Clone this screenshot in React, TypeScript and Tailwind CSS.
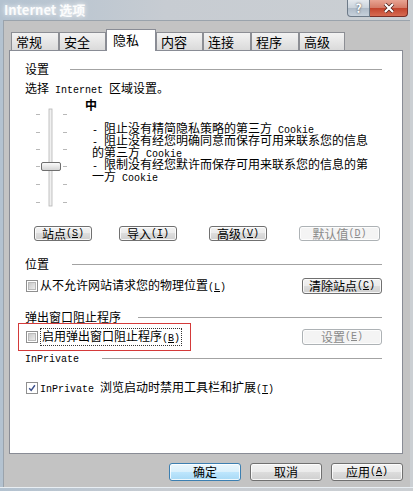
import type { ReactNode } from 'react';

function L({ children }: { children: ReactNode }) {
  return <span className="font-['Liberation_Mono',monospace] text-[10px]">{children}</span>;
}

function Key({ k }: { k: string }) {
  return (
    <span className="font-['Liberation_Mono',monospace] text-[10px]">
      (<span className="underline underline-offset-1">{k}</span>)
    </span>
  );
}

function Heading({ label, lineGap }: { label: ReactNode; lineGap: string }) {
  return (
    <div className="flex h-3 items-center leading-3">
      <span className="whitespace-nowrap">{label}</span>
      <div className={`h-px flex-1 bg-[#a3a3a3] ${lineGap}`} />
    </div>
  );
}

function Btn({ children, className, disabled, primary }: { children: ReactNode; className: string; disabled?: boolean; primary?: boolean }) {
  const tone = disabled
    ? 'border-[#adb2b5] bg-[#f4f4f4] text-[#8a8a8a]'
    : primary
      ? 'border-[#3c7fb1] bg-[linear-gradient(180deg,#eaf6fd_0%,#d9f0fc_50%,#bee6fd_50%,#a7d9f5_100%)] text-black'
      : 'border-[#707070] bg-[linear-gradient(180deg,#f2f2f2_0%,#ebebeb_50%,#dddddd_50%,#cfcfcf_100%)] text-black';
  return (
    <div className={`flex items-center justify-center rounded-[3px] border leading-3 shadow-[inset_0_0_0_1px_rgba(255,255,255,0.8)] ${tone} ${className}`}>
      {children}
    </div>
  );
}

function Check({ checked }: { checked?: boolean }) {
  return (
    <div className="flex h-3 w-3 shrink-0 items-center justify-center border border-[#8f8f8f] bg-white p-px">
      {checked ? (
        <svg width="10" height="10" viewBox="0 0 10 10">
          <path d="M1.5 5.2 L4 8 L8.6 1.6" fill="none" stroke="#3b4f8c" strokeWidth="1.8" />
        </svg>
      ) : (
        <div className="h-full w-full border border-[#b9b9b9] bg-[linear-gradient(135deg,#c9c9c9,#ececec)]" />
      )}
    </div>
  );
}

function Slider() {
  const ticks = [15, 33, 50, 67, 85, 103];
  return (
    <svg width="60" height="110" viewBox="0 0 60 110" className="shrink-0">
      <defs>
        <linearGradient id="thumb" x1="0" y1="0" x2="0" y2="1">
          <stop offset="0" stopColor="#fdfdfd" />
          <stop offset="1" stopColor="#d2d2d2" />
        </linearGradient>
      </defs>
      <rect x="24" y="10" width="3" height="97" fill="#f0f0f0" stroke="#b4b4b4" strokeWidth="0.8" />
      {ticks.map((y) => (
        <g key={y}>
          <line x1="11" y1={y + 0.5} x2="15" y2={y + 0.5} stroke="#b8b8b8" />
          <line x1="38" y1={y + 0.5} x2="42" y2={y + 0.5} stroke="#b8b8b8" />
        </g>
      ))}
      <rect x="16.5" y="63.5" width="19" height="8" rx="1.5" fill="url(#thumb)" stroke="#6f6f6f" />
    </svg>
  );
}

const tabs = [
  { label: '常规', w: 'w-[48px]' },
  { label: '安全', w: 'w-[47px]' },
  { label: '隐私', w: 'w-[50px]', active: true },
  { label: '内容', w: 'w-[47px]' },
  { label: '连接', w: 'w-[48px]' },
  { label: '程序', w: 'w-[48px]' },
  { label: '高级', w: 'w-[46px]' },
];

export default function App() {
  return (
    <div className="flex h-[491px] w-[413px] flex-col bg-[linear-gradient(90deg,#b3c2d0,#c7ccd2_40%,#cbcfd3)] font-['Noto_Sans_CJK_SC','Noto_Sans',sans-serif] text-[12px] text-black">
      {/* title bar */}
      <div className="flex h-5 shrink-0 items-start justify-between pr-[5px]">
        <span className="pl-[4px] pt-[2px] text-[13px] font-bold leading-4 text-white/90 [text-shadow:0_0_5px_#fff]">Internet 选项</span>
        <div className="flex">
          <div className="flex h-[17px] w-[23px] items-center justify-center rounded-bl-[4px] border border-t-0 border-[#6d7a88] bg-[linear-gradient(180deg,#e4e9ee_0%,#c9d2db_50%,#aebac7_51%,#c7d1db_100%)] text-[12px] font-bold leading-3 text-white [text-shadow:0_0_2px_#333]">
            ?
          </div>
          <div className="flex h-[17px] w-[38px] items-center justify-center rounded-br-[4px] border border-l-0 border-t-0 border-[#7a2e26] bg-[linear-gradient(180deg,#e8a493_0%,#d47a66_50%,#c2432c_51%,#d66b52_100%)]">
            <svg width="12" height="10" viewBox="0 0 12 10">
              <path d="M2 1 L10 9 M10 1 L2 9" stroke="#4a1c16" strokeWidth="3.6" />
              <path d="M2 1 L10 9 M10 1 L2 9" stroke="#fff" strokeWidth="2.2" />
            </svg>
          </div>
        </div>
      </div>

      {/* client area */}
      <div className="mx-[3px] flex flex-1 flex-col border-l border-t border-[#9aa3ac] bg-[#c3c3c3]">
        <div className="ml-[7px] mt-[8px] flex h-[21px] items-end">
          {tabs.map((t) =>
            t.active ? (
              <div
                key={t.label}
                className={`relative z-10 -mb-px h-[22px] ${t.w} border border-b-0 border-[#898c95] bg-white pl-[6px] pt-[2px] text-[13px] leading-4`}
              >
                {t.label}
              </div>
            ) : (
              <div
                key={t.label}
                className={`h-[18px] ${t.w} border border-b-0 border-[#8c8e94] bg-[linear-gradient(180deg,#f3f3f3,#dadada)] pl-[4px] pt-[1px] text-[13px] leading-4`}
              >
                {t.label}
              </div>
            ),
          )}
        </div>

        <div className="ml-[5px] flex h-[404px] w-[394px] flex-col border border-[#898c95] bg-white pl-[15px] pr-[20px]">
          <div className="mt-[12px]">
            <Heading label="设置" lineGap="ml-[21px]" />
          </div>
          <div className="mt-[7px] h-3 leading-3">
            选择<L> Internet </L>区域设置。
          </div>

          <div className="mt-[5px] flex h-[110px]">
            <Slider />
            <div className="flex flex-col">
              <div className="h-3 font-bold leading-3">中</div>
              <div className="ml-[7px] mt-[11px] whitespace-nowrap leading-3">
                <div className="h-3"><L>- </L>阻止没有精简隐私策略的第三方<L> Cookie</L></div>
                <div className="h-3"><L>- </L>阻止没有经您明确同意而保存可用来联系您的信息</div>
                <div className="h-3">的第三方<L> Cookie</L></div>
                <div className="h-3"><L>- </L>限制没有经您默许而保存可用来联系您的信息的第</div>
                <div className="h-3">一方<L> Cookie</L></div>
              </div>
            </div>
          </div>

          <div className="mt-[17px] flex h-[15px]">
            <Btn className="ml-[9px] w-[58px]">站点<Key k="S" /></Btn>
            <Btn className="ml-[27px] w-[58px]">导入<Key k="I" /></Btn>
            <Btn className="ml-[32px] w-[58px]">高级<Key k="V" /></Btn>
            <Btn className="ml-[32px] w-[81px]" disabled>默认值<Key k="D" /></Btn>
          </div>

          <div className="mt-[17px]">
            <Heading label="位置" lineGap="ml-[23px]" />
          </div>
          <div className="mt-[8px] flex h-4 items-center justify-between">
            <div className="ml-px flex items-center gap-[2px] leading-3">
              <Check />
              <span>从不允许网站请求您的物理位置<Key k="L" /></span>
            </div>
            <Btn className="h-4 w-[80px]">清除站点<Key k="C" /></Btn>
          </div>

          <div className="mt-[17px]">
            <Heading label="弹出窗口阻止程序" lineGap="ml-[17px]" />
          </div>
          <div className="-ml-[7px] flex h-[28px] items-center justify-between">
            <div className="flex h-[28px] w-[173px] items-center gap-[2px] border border-[#d43a3a] pl-[7px]">
              <Check />
              <span className="border border-dotted border-[#333] px-px leading-[13px]">
                启用弹出窗口阻止程序<Key k="B" />
              </span>
            </div>
            <Btn className="h-4 w-[80px]" disabled>设置<Key k="E" /></Btn>
          </div>

          <div className="mt-[1px]">
            <Heading label={<L>InPrivate</L>} lineGap="ml-[23px]" />
          </div>
          <div className="ml-px mt-[18px] flex h-3 items-center gap-[2px] leading-3">
            <Check checked />
            <span>
              <L>InPrivate </L>浏览启动时禁用工具栏和扩展<Key k="T" />
            </span>
          </div>
        </div>

        <div className="mt-[9px] flex h-[18px] justify-end gap-[9px] pr-[7px]">
          <Btn className="w-[72px]" primary>确定</Btn>
          <Btn className="w-[72px]">取消</Btn>
          <Btn className="w-[72px]">应用<Key k="A" /></Btn>
        </div>
      </div>
      <div className="h-[4px] shrink-0 border-t border-[#e8eef3]" />
    </div>
  );
}
